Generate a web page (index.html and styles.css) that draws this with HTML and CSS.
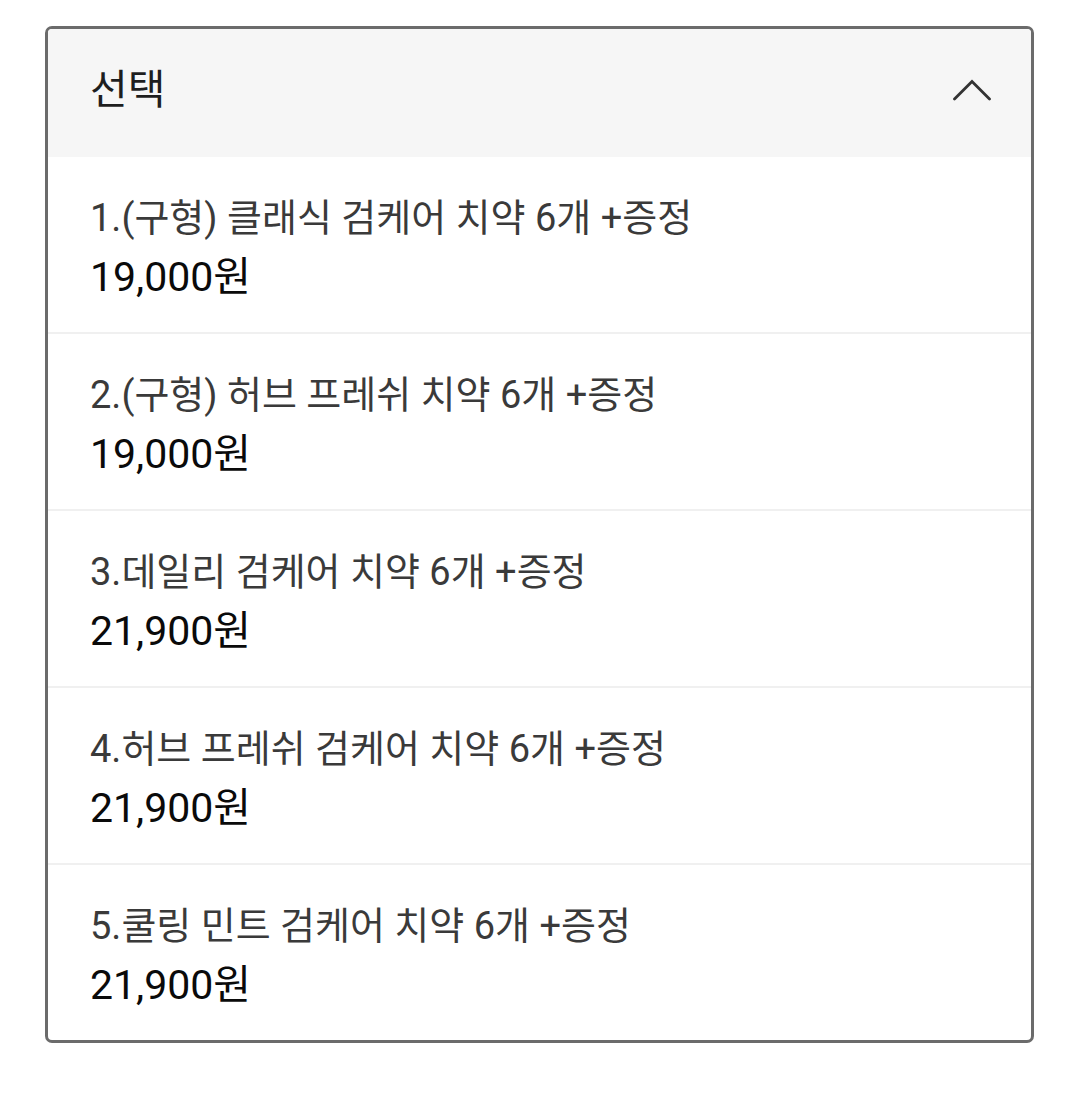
FILE: index.html
```html
<!DOCTYPE html>
<html lang="ko">
<head>
<meta charset="utf-8">
<link rel="stylesheet" href="styles.css">
</head>
<body>
<div class="select">
  <div class="select-head">
    <span class="select-title">선택</span>
    <svg class="chevron" width="38" height="22" viewBox="0 0 38 22"><path d="M1.5 20 L19 2.5 L36.5 20" fill="none" stroke="#333" stroke-width="2.8" stroke-linecap="round" stroke-linejoin="miter"/></svg>
  </div>
  <ul class="options">
    <li class="option"><div class="opt-name">1.(구형) 클래식 검케어 치약 6개 +증정</div><div class="opt-price">19,000원</div></li>
    <li class="option"><div class="opt-name">2.(구형) 허브 프레쉬 치약 6개 +증정</div><div class="opt-price">19,000원</div></li>
    <li class="option"><div class="opt-name">3.데일리 검케어 치약 6개 +증정</div><div class="opt-price">21,900원</div></li>
    <li class="option"><div class="opt-name">4.허브 프레쉬 검케어 치약 6개 +증정</div><div class="opt-price">21,900원</div></li>
    <li class="option"><div class="opt-name">5.쿨링 민트 검케어 치약 6개 +증정</div><div class="opt-price">21,900원</div></li>
  </ul>
</div>
</body>
</html>
```

FILE: styles.css
```css
* { box-sizing: border-box; }
html, body { margin: 0; padding: 0; background: #fff; }
body {
  font-family: "Roboto", "Noto Sans CJK KR", sans-serif;
}
.select {
  margin: 26px 46px 0 45px;
  border: 3px solid #6b6b6b;
  border-radius: 7px;
  overflow: hidden;
  background: #fff;
}
.select-head {
  height: 128px;
  background: #f6f6f6;
  display: flex;
  align-items: center;
  justify-content: space-between;
  padding: 0 40px 0 42px;
}
.select-title {
  font-size: 41px;
  color: #1e1e1e;
  line-height: 1;
  margin-top: -6px;
}
.chevron { display: block; margin-top: -6px; }
.options { list-style: none; margin: 0; padding: 0; }
.option {
  padding: 32px 42px 25px;
  border-top: 2px solid #f0f0f0;
}
.option:first-child { border-top: none; padding-bottom: 25px; }
.opt-name {
  font-size: 38px;
  line-height: 59px;
  color: #3a3a3a;
}
.opt-price {
  font-size: 41px;
  line-height: 59px;
  color: #0a0a0a;
}
```
